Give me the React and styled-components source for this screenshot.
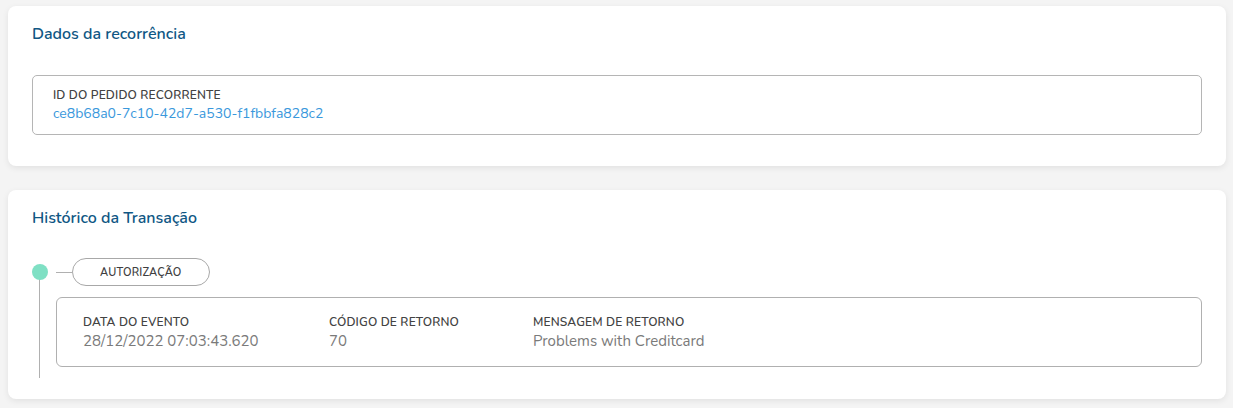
import styled, { createGlobalStyle } from "styled-components"

const Global = createGlobalStyle`
    body {
        margin: 0;
        background: #f4f4f4;
        font-family: "Nunito", Lato, "Noto Sans", sans-serif;
    }
`

const Page = styled.div`
    display: flex;
    flex-direction: column;
    gap: 24px;
    padding: 6px 7px 10px 8px;
`

const Card = styled.section`
    background: #fff;
    border-radius: 8px;
    box-shadow: 0 2px 6px rgba(0, 0, 0, 0.08);
    padding: ${p => p.$pad || "18px 24px 31px 24px"};
`

const Titulo = styled.h3`
    margin: 0;
    font-size: 16px;
    font-weight: 600;
    color: #0f5784;
    line-height: 20px;
`

const CampoBox = styled.div`
    margin-top: 31px;
    border: 1px solid #b5b5b5;
    border-radius: 5px;
    padding: 11px 20px 11px 20px;
`

const Rotulo = styled.div`
    font-size: 12px;
    font-weight: 600;
    color: #434343;
    line-height: 17px;
    letter-spacing: 0.15px;
`

const Valor = styled.div`
    font-size: ${p => p.$size || 13}px;
    color: ${p => p.$cor || "#7a7a7a"};
    line-height: ${p => p.$lh || 19}px;
`

const Linha = styled.div`
    position: relative;
    margin-top: 30px;
    padding-left: 24px;
    padding-bottom: 11px;
`

const Trilho = styled.div`
    position: absolute;
    left: 7px;
    top: 14px;
    bottom: 0;
    width: 1px;
    background: #b0b0b0;
`

const Ponto = styled.div`
    position: absolute;
    left: 0;
    top: 6px;
    width: 16px;
    height: 16px;
    border-radius: 50%;
    background: #7fe0c4;
`

const Cabecalho = styled.div`
    display: flex;
    align-items: center;
`

const Conector = styled.div`
    width: 16px;
    height: 1px;
    background: #b0b0b0;
`

const Pilula = styled.div`
    border: 1px solid #a8a8a8;
    border-radius: 14px;
    padding: 0 27px;
    height: 26px;
    display: flex;
    align-items: center;
    font-size: 11px;
    font-weight: 600;
    color: #3f3f3f;
    letter-spacing: 0.2px;
`

const EventoBox = styled.div`
    margin-top: 11px;
    border: 1px solid #b0b0b0;
    border-radius: 6px;
    padding: 16px 26px 15px 26px;
    display: grid;
    grid-template-columns: 246px 204px 1fr;
`

const Coluna = styled.div`
    display: flex;
    flex-direction: column;
`

const eventos = [
    { rotulo: "DATA DO EVENTO", valor: "28/12/2022 07:03:43.620" },
    { rotulo: "CÓDIGO DE RETORNO", valor: "70" },
    { rotulo: "MENSAGEM DE RETORNO", valor: "Problems with Creditcard" },
]

const App = () => {
    return <>
        <Global />
        <Page>
            <Card>
                <Titulo>Dados da recorrência</Titulo>
                <CampoBox>
                    <Rotulo>ID DO PEDIDO RECORRENTE</Rotulo>
                    <Valor $size={14} $cor="#3a98dc">ce8b68a0-7c10-42d7-a530-f1fbbfa828c2</Valor>
                </CampoBox>
            </Card>

            <Card $pad="18px 24px 21px 24px">
                <Titulo>Histórico da Transação</Titulo>
                <Linha>
                    <Trilho />
                    <Ponto />
                    <Cabecalho>
                        <Conector />
                        <Pilula>AUTORIZAÇÃO</Pilula>
                    </Cabecalho>
                    <EventoBox>
                        {eventos.map(e => (
                            <Coluna key={e.rotulo}>
                                <Rotulo>{e.rotulo}</Rotulo>
                                <Valor $size={15} $lh={20}>{e.valor}</Valor>
                            </Coluna>
                        ))}
                    </EventoBox>
                </Linha>
            </Card>
        </Page>
    </>
}

export default App
